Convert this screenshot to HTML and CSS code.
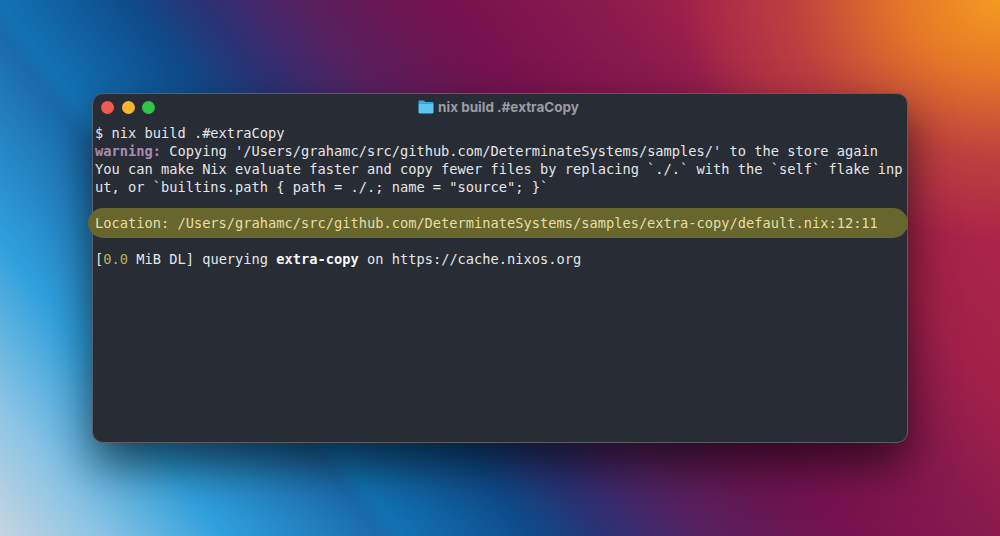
FILE: index.html
```html
<!DOCTYPE html>
<html lang="en">
<head>
<meta charset="utf-8">
<title>nix build .#extraCopy</title>
<link rel="stylesheet" href="styles.css">
</head>
<body>
<main class="desktop">
  <section class="window">
    <header class="titlebar">
      <div class="lights">
        <span class="light red"></span>
        <span class="light yellow"></span>
        <span class="light green"></span>
      </div>
      <div class="title">
        <svg class="folder" width="16" height="14" viewBox="0 0 16 14" aria-hidden="true">
          <path d="M0.5 3V1.6C0.5 0.9 1 .4 1.7 .4H5.4C5.9 .4 6.2 .6 6.5 1L7.2 1.9H14.2C15 1.9 15.5 2.4 15.5 3.1V3Z" fill="#3fa9e0"/>
          <path d="M0.5 3.2H15.5V12.3C15.5 13 15 13.5 14.3 13.5H1.7C1 13.5 .5 13 .5 12.3Z" fill="#5cc4f2"/>
        </svg>
        <span>nix build .#extraCopy</span>
      </div>
    </header>
    <div class="terminal">
      <div class="line">$ nix build .#extraCopy</div>
      <div class="line"><span class="warn">warning:</span> Copying '/Users/grahamc/src/github.com/DeterminateSystems/samples/' to the store again</div>
      <div class="line">You can make Nix evaluate faster and copy fewer files by replacing `./.` with the `self` flake inp</div>
      <div class="line">ut, or `builtins.path { path = ./.; name = "source"; }`</div>
      <div class="line"></div>
      <div class="line highlighted">Location: /Users/grahamc/src/github.com/DeterminateSystems/samples/extra-copy/default.nix:12:11</div>
      <div class="line"></div>
      <div class="line">[<span class="num">0.0</span> MiB DL] querying <b class="strong">extra-copy</b> on https://cache.nixos.org</div>
    </div>
  </section>
</main>
</body>
</html>
```
FILE: styles.css
```css
* { box-sizing: border-box; }
html, body { margin: 0; padding: 0; }
body { width: 1000px; height: 536px; overflow: hidden; }

.desktop {
  width: 1000px;
  height: 536px;
  padding: 93px 92px 93px 92px;
  background:
    radial-gradient(ellipse 320px 240px at 1000px 0, #f59a20 0%, rgba(232,124,38,.94) 30%, rgba(197,74,60,.72) 65%, rgba(180,40,70,0) 100%),
    linear-gradient(53deg,
      #c5d5e2 0%, #8cc4e4 7.1%, #2fa0dc 15.9%, #1a6aaa 27.1%, #1272b2 28.7%,
      #0f4a8a 38%, #2a3274 43%, #4a2566 48%, #55215f 50%, #6c1552 57%,
      #76124f 60.8%, #8a1a4c 71.3%, #a0204a 78%, #aa2448 86%, #b02a44 100%);
}

.window {
  width: 816px;
  height: 350px;
  display: flex;
  flex-direction: column;
  background: #282c34;
  border: 1px solid #5b5e66;
  border-radius: 11px;
  box-shadow: 0 22px 45px rgba(0,0,0,.6);
}

.titlebar {
  position: relative;
  height: 25px;
  flex: none;
  display: flex;
  align-items: center;
  justify-content: center;
}
.lights {
  position: absolute;
  left: 8px;
  top: 7px;
  display: flex;
  gap: 7.5px;
}
.light { width: 13px; height: 13px; border-radius: 50%; }
.red { background: #f05a52; }
.yellow { background: #f5b62c; }
.green { background: #2fc546; }

.title {
  display: flex;
  align-items: center;
  gap: 4px;
  padding-right: 3px;
  color: #9a9da3;
  font: 700 13.5px/16px "Inter", "Liberation Sans", sans-serif;
}

.terminal {
  padding: 5px 0 0;
  font: 13.7px/18px "DejaVu Sans Mono", "Liberation Mono", monospace;
  color: #e4e6e8;
}
.line { height: 18px; padding-left: 2px; white-space: pre; }
.warn { color: #a88cb4; font-weight: 700; }
.num { color: #b9b55a; }
.strong { color: #f4f5f6; font-weight: 700; }

.highlighted {
  height: 30px;
  margin: -6px 0 -6px -5px;
  width: 820px;
  padding: 6px 0 0 7px;
  border-radius: 15px;
  background: #67662c;
  color: #e6dfa4;
  position: relative;
}
```
